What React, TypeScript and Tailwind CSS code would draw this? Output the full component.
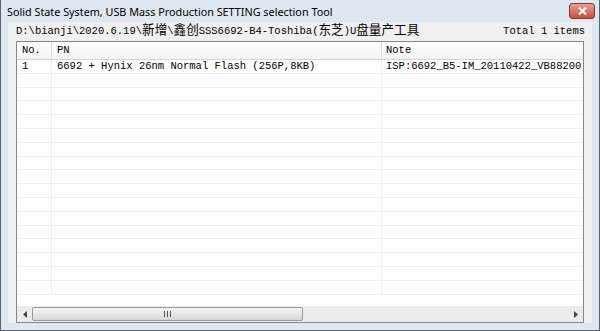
const mono = "font-['Liberation_Mono','Noto_Sans_CJK_SC',monospace]";

function Cjk({ children }: { children: string }) {
  return (
    <span className="font-['Noto_Sans_CJK_SC',sans-serif] text-[12.6px] leading-none">
      {children}
    </span>
  );
}

const rowCount = 17;

function ScrollArrow({ dir }: { dir: "left" | "right" }) {
  return (
    <div className="flex h-full w-[15px] shrink-0 items-center justify-center">
      <svg width="4" height="7" viewBox="0 0 4 7">
        {dir === "left" ? (
          <path d="M4 0 L0 3.5 L4 7 Z" fill="#444" />
        ) : (
          <path d="M0 0 L4 3.5 L0 7 Z" fill="#444" />
        )}
      </svg>
    </div>
  );
}

export default function App() {
  return (
    <div className="flex h-[331px] w-[600px] flex-col overflow-hidden border-x border-b border-[#5a6470] bg-[#dfe7f1]">
      {/* title bar */}
      <div className="flex h-[22px] shrink-0 items-start justify-between pl-[6px] pr-[4px]">
        <span className="mt-[4px] font-['Noto_Sans',sans-serif] text-[10.8px] leading-[16px] text-black">
          Solid State System, USB Mass Production SETTING selection Tool
        </span>
        <div className="mt-[3px] flex h-[16px] w-[26px] items-center justify-center rounded-[3px] border border-[#8a3a30] bg-gradient-to-b from-[#e8a093] to-[#c4503c]">
          <svg width="9" height="8" viewBox="0 0 9 8">
            <path d="M1 0.5 L8 7.5 M8 0.5 L1 7.5" stroke="#fff" strokeWidth="2" />
          </svg>
        </div>
      </div>

      {/* client */}
      <div className="mx-[7px] mb-[7px] flex flex-1 flex-col bg-[#f0f0f0] px-[8px]">
        <div className={`flex h-[19px] shrink-0 items-center justify-between text-[10.5px] text-black ${mono}`}>
          <span className="whitespace-pre">
            D:\bianji\2020.6.19\<Cjk>新增</Cjk>\<Cjk>鑫创</Cjk>SSS6692-B4-Toshiba(<Cjk>东芝</Cjk>)U<Cjk>盘量产工具</Cjk>
          </span>
          <span className="-mr-[1px] whitespace-pre">Total 1 items</span>
        </div>

        {/* list view */}
        <div className="flex h-[282px] shrink-0 flex-col border border-[#828790] bg-white">
          <div className="flex flex-1 flex-col overflow-hidden">
            <div className={`flex h-[18px] shrink-0 border-b border-[#d5d5d5] bg-gradient-to-b from-white to-[#f3f4f6] text-[10.5px] text-black ${mono}`}>
              <div className="flex w-[35px] items-center border-r border-[#dcdcdc] pl-[5px]">No.</div>
              <div className="flex w-[330px] items-center border-r border-[#dcdcdc] pl-[5px]">PN</div>
              <div className="flex flex-1 items-center pl-[4px]">Note</div>
            </div>
            {Array.from({ length: rowCount }).map((_, i) => (
              <div
                key={i}
                className={`flex h-[13.8px] shrink-0 border-b border-[#f0f0f0] text-[10.5px] leading-[13px] text-black ${mono}`}
              >
                <div className="flex w-[35px] items-center border-r border-[#f0f0f0] pl-[5px]">
                  {i === 0 ? "1" : ""}
                </div>
                <div className="flex w-[330px] items-center whitespace-pre border-r border-[#f0f0f0] pl-[5px]">
                  {i === 0 ? "6692 + Hynix 26nm Normal Flash (256P,8KB)" : ""}
                </div>
                <div className="flex flex-1 items-center overflow-hidden whitespace-pre pl-[4px]">
                  {i === 0 ? "ISP:6692_B5-IM_20110422_VB88200" : ""}
                </div>
              </div>
            ))}
          </div>

          {/* horizontal scrollbar */}
          <div className="flex h-[16px] shrink-0 items-stretch bg-[#ececec] py-[1px]">
            <ScrollArrow dir="left" />
            <div className="flex flex-1 items-stretch">
              <div className="flex w-[271px] items-center justify-center rounded-[2px] border border-[#9a9a9a] bg-gradient-to-b from-[#f4f4f4] to-[#d8d8d8]">
                <svg width="7" height="6" viewBox="0 0 7 6">
                  <path d="M0.5 0 V6 M3.5 0 V6 M6.5 0 V6" stroke="#555" strokeWidth="1" />
                </svg>
              </div>
            </div>
            <ScrollArrow dir="right" />
          </div>
        </div>
      </div>
    </div>
  );
}
